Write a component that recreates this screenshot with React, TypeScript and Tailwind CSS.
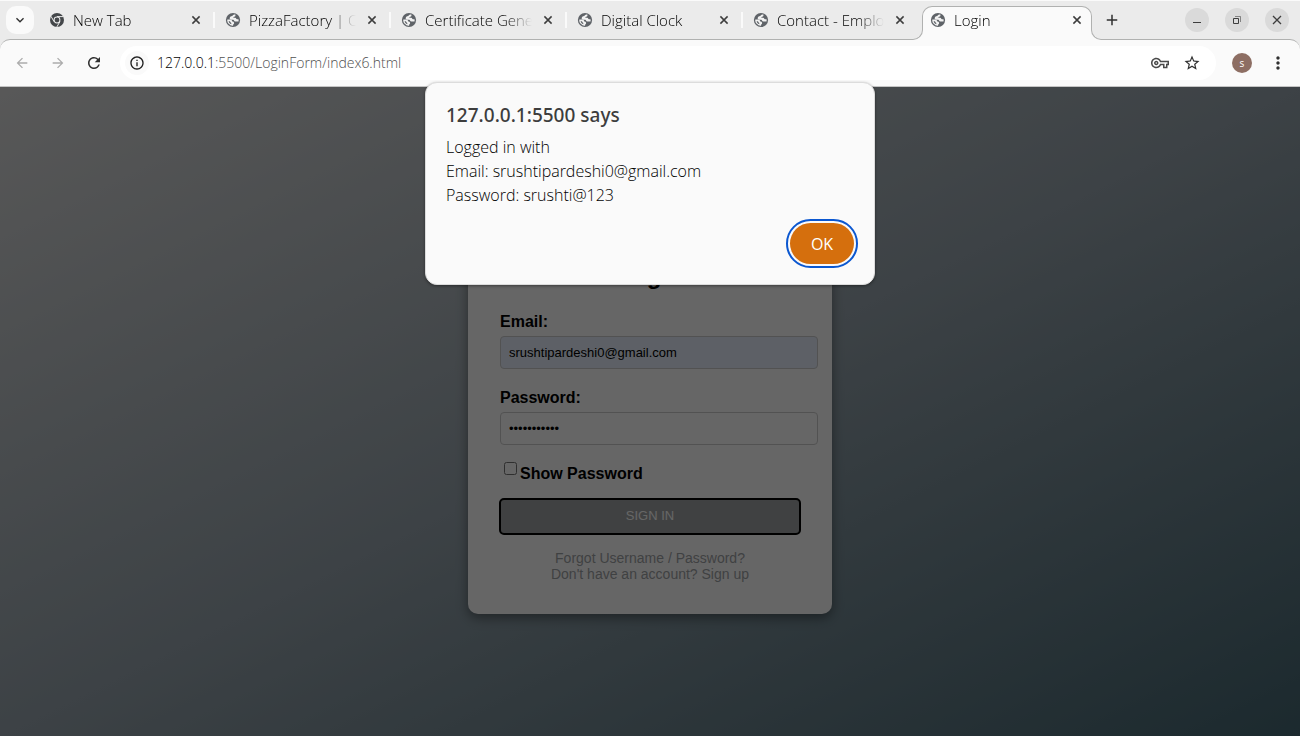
import { useState } from "react";
import type { ReactNode } from "react";
import {
  MdAdd,
  MdArrowBack,
  MdArrowForward,
  MdExpandMore,
  MdInfoOutline,
  MdMoreVert,
  MdOutlineVpnKey,
  MdRefresh,
  MdStarBorder,
} from "react-icons/md";

const tabs = ["New Tab", "PizzaFactory | Co", "Certificate Gener", "Digital Clock", "Contact - Employ", "Login"];

function ChromeIcon() {
  return (
    <svg viewBox="0 0 16 16" className="size-4 shrink-0" aria-hidden="true">
      <circle cx="8" cy="8" r="7" fill="#44474a" />
      <path d="M8 4.6h6.2M5.1 9.7 2 4.3M10.9 9.7 7.8 15" stroke="#ebebeb" strokeWidth="1" />
      <circle cx="8" cy="8" r="3.4" fill="#ebebeb" />
      <circle cx="8" cy="8" r="2.4" fill="#44474a" />
    </svg>
  );
}

function GlobeIcon() {
  return (
    <svg viewBox="0 0 16 16" className="size-4 shrink-0" fill="#f2f2f2" aria-hidden="true">
      <circle cx="8" cy="8" r="7.1" fill="#5f6368" />
      <path d="M10.400 2.500C8.700 2.400 7.600 3 7.300 4.100C5.500 4.300 4.700 5.100 4.700 6.800C4.700 7.500 5.300 7.700 6 7.700H8.200C9.300 7.700 8.900 9.500 10.300 9.500H13.500C13.700 8.800 13.700 8 13.500 7.200H12C11.100 7.200 11.300 5.800 10.200 5.700H8.300C8.300 4.600 9.900 4.900 10.400 4Z" />
      <path d="M2.300 7.600C2.100 9.200 2.500 10.300 3.200 11.300L5.500 13.300C6.500 13.700 7.300 13.800 8.100 13.700V12.500C9 12.300 9.200 11.600 9.100 10.800C8.900 9.900 8.200 9.500 7.200 9.500C6.900 8.300 6.300 7.700 5.200 7.600Z M3.600 9.200H4.800C5.300 9.200 5.200 10.700 6.300 10.900V12.200C4.700 11.700 3.900 10.500 3.600 9.200Z" fillRule="evenodd" />
    </svg>
  );
}

function Tab({ title, active, separator }: { title: string; active: boolean; separator: boolean }) {
  return (
    <div
      className={
        active
          ? "relative mt-1.5 ml-[3px] flex h-[34px] w-[170px] shrink-0 items-center rounded-t-[10px] border border-b-0 border-[#b0b1b0] bg-[#fafafa] pr-1.5 pb-2 pl-[7px]"
          : "flex h-10 w-44 min-w-0 items-center pl-2.5"
      }
    >
      {active && (
        <>
          <span className="absolute bottom-0 -left-2.5 size-2.5 bg-[#fafafa]">
            <span className="block size-full rounded-br-[10px] border-r border-b border-[#b0b1b0] bg-[#ebebeb]" />
          </span>
          <span className="absolute -right-2.5 bottom-0 size-2.5 bg-[#fafafa]">
            <span className="block size-full rounded-bl-[10px] border-b border-l border-[#b0b1b0] bg-[#ebebeb]" />
          </span>
        </>
      )}
      {title === "New Tab" ? <ChromeIcon /> : <GlobeIcon />}
      <span className="ml-2 min-w-0 flex-1 overflow-hidden mask-r-from-75% mask-r-to-100% text-[15px] leading-5 font-light whitespace-nowrap text-black">
        {title}
      </span>
      <button type="button" aria-label={"Close " + title} className="ml-2 flex size-4 shrink-0 items-center justify-center">
        <svg viewBox="0 0 16 16" className="size-4" fill="none" stroke="#3d3d3d" strokeWidth="1.5" aria-hidden="true">
          <path d="m4.400 4.400 7.200 7.200M11.600 4.400l-7.200 7.200" />
        </svg>
      </button>
      {!active && <span className={separator ? "ml-[9px] h-4 w-0.5 shrink-0 bg-[#fafafa]" : "ml-[9px] w-0.5 shrink-0"} />}
    </div>
  );
}

function WindowButton({ label, children }: { label: string; children: ReactNode }) {
  return (
    <button type="button" aria-label={label} className="flex size-6 items-center justify-center rounded-full bg-[#dadada]">
      <svg viewBox="0 0 16 16" className="size-4" fill="none" stroke="#3d3d3d" aria-hidden="true">
        {children}
      </svg>
    </button>
  );
}

function BrowserBar() {
  return (
    <header className="relative bg-[#ebebeb] font-['Open_Sans',sans-serif]">
      <div className="relative z-10 flex h-10 items-start border-t border-[#fafafa]">
        <button type="button" aria-label="Search tabs" className="mt-[5px] ml-1.5 flex size-7 shrink-0 items-center justify-center rounded-[10px] bg-[#fafafa] text-[#303030]">
          <MdExpandMore className="size-4" />
        </button>
        <nav aria-label="Tabs" className="-mt-px ml-[5px] flex">
          {tabs.map((title, i) => (
            <Tab key={title} title={title} active={i === 5} separator={i < 4} />
          ))}
        </nav>
        <button type="button" aria-label="New tab" className="mt-2.5 ml-[11px] text-[#303030]">
          <MdAdd className="size-[18px]" />
        </button>
        <div className="mt-[7px] mr-[11px] ml-auto flex gap-4">
          <WindowButton label="Minimize">
            <path d="M4 10.5h8" />
          </WindowButton>
          <WindowButton label="Restore">
            <path d="M4.5 6.5h5v5h-5z" />
            <path d="M6 4.5h5.500v5.500" strokeOpacity=".55" />
          </WindowButton>
          <WindowButton label="Close">
            <path d="m4 4 8 8M12 4l-8 8" strokeWidth="1.300" />
          </WindowButton>
        </div>
      </div>
      <div className="-mt-px flex h-12 items-center rounded-t-[10px] border-t border-b border-t-[#b0b1b0] border-b-[#c4c4c4] bg-[#fafafa] pr-3 pl-3.5 text-[#303030]">
        <button type="button" aria-label="Back" className="text-[#acacac]">
          <MdArrowBack className="size-4" />
        </button>
        <button type="button" aria-label="Forward" className="ml-5 text-[#acacac]">
          <MdArrowForward className="size-4" />
        </button>
        <button type="button" aria-label="Reload" className="ml-[19px]">
          <MdRefresh className="size-[18px]" />
        </button>
        <div className="ml-[17px] flex h-[34px] flex-1 items-center rounded-full bg-white pr-[15px] pl-[5px]">
          <button type="button" aria-label="Site information" className="flex size-6 items-center justify-center rounded-full bg-[#fafafa] text-[#202020]">
            <MdInfoOutline className="size-4" />
          </button>
          <span className="ml-2 flex-1 text-sm font-light text-[#505050]">
            <span className="text-black">127.0.0.1</span>:5500/LoginForm/index6.html
          </span>
          <button type="button" aria-label="Saved passwords">
            <MdOutlineVpnKey className="size-[18px] text-[#4a4a4a]" />
          </button>
          <button type="button" aria-label="Bookmark this page" className="ml-3.5">
            <MdStarBorder className="size-[18px]" />
          </button>
        </div>
        <button type="button" aria-label="Profile" className="ml-4 flex size-5 items-center justify-center rounded-full bg-[#8d6e63] text-[10px] text-white">
          s
        </button>
        <button type="button" aria-label="Menu" className="ml-4">
          <MdMoreVert className="size-5" />
        </button>
      </div>
    </header>
  );
}

function LoginCard() {
  const [visible, setVisible] = useState(false);
  return (
    <form className="w-[364px] rounded-[10px] bg-white p-8 font-['Liberation_Sans',sans-serif] text-base leading-[18px] text-black shadow-[0_4px_12px_rgba(0,0,0,0.4)]">
      <h2 className="mt-5 mb-6 text-center text-2xl leading-[27px] font-bold">Login</h2>
      <label htmlFor="email" className="block font-bold">Email:</label>
      <input
        id="email"
        type="email"
        defaultValue="srushtipardeshi0@gmail.com"
        className="mt-[5px] box-content block h-[15px] w-full rounded-[4px] border border-[#cccccc] bg-[#e8f0fe] p-2 text-[13px] leading-[15px]"
      />
      <label htmlFor="password" className="mt-5 block font-bold">Password:</label>
      <input
        id="password"
        type={visible ? "text" : "password"}
        defaultValue="srushti@123"
        className="mt-[5px] box-content block h-[15px] w-full rounded-[4px] border border-[#cccccc] bg-white p-2 text-[13px] leading-[15px]"
      />
      <div className="mt-4 flex items-start pl-1">
        <input
          id="show"
          type="checkbox"
          checked={visible}
          onChange={() => setVisible(!visible)}
          className="mt-px size-[13px]"
        />
        <label htmlFor="show" className="mt-1 ml-[3px] font-bold">Show Password</label>
      </div>
      <button
        type="button"
        className="mt-4 block h-[35px] w-full rounded-[4px] bg-[#a0a3a5] text-[13px] text-white outline-2 -outline-offset-1 outline-black"
      >
        SIGN IN
      </button>
      <p className="mt-4 text-center text-sm leading-4 text-[#9fa3a6]">
        <a href="#forgot">Forgot Username / Password?</a>
        <br />
        Don't have an account? <a href="#signup">Sign up</a>
      </p>
    </form>
  );
}

function AlertDialog() {
  return (
    <div
      role="alertdialog"
      aria-labelledby="alert-title"
      aria-describedby="alert-text"
      className="absolute top-[82px] left-1/2 z-20 w-[450px] -translate-x-1/2 rounded-xl border border-[#dcdcdc] bg-[#fafafa] px-5 pt-5 pb-5 font-['Open_Sans',sans-serif] text-[#3d3d3d] shadow-[0_1px_3px_rgba(0,0,0,0.4)]"
    >
      <h1 id="alert-title" className="font-['Noto_Sans',sans-serif] text-[19px] leading-6 font-medium">127.0.0.1:5500 says</h1>
      <p id="alert-text" className="mt-2 text-base leading-6 font-light text-black">
        Logged in with
        <br />
        Email: srushtipardeshi0@gmail.com
        <br />
        Password: srushti@123
      </p>
      <div className="mt-4 flex justify-end">
        <button
          type="button"
          className="h-[41px] w-16 rounded-full bg-[#d56f0d] text-base font-medium text-white outline-2 outline-offset-2 outline-[#0b57d0]"
        >
          OK
        </button>
      </div>
    </div>
  );
}

export default function App() {
  return (
    <div className="relative flex min-h-screen flex-col">
      <BrowserBar />
      <main className="relative flex flex-1 items-center justify-center bg-linear-to-br from-[#dcdcdc] via-[#98a5ae] to-[#466874]">
        <LoginCard />
        <div className="absolute inset-0 bg-black/60" />
      </main>
      <AlertDialog />
    </div>
  );
}
